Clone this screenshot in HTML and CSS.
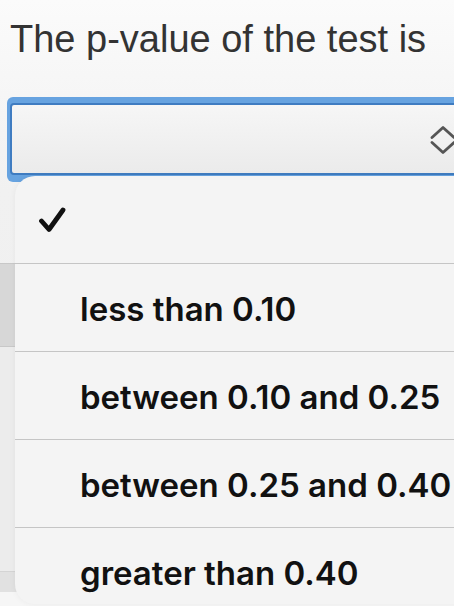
FILE: index.html
```html
<!DOCTYPE html>
<html lang="en">
<head>
<meta charset="utf-8">
<title>p-value question</title>
<link rel="stylesheet" href="styles.css">
</head>
<body>
<div class="page">
  <h1 class="question">The p-value of the test is</h1>
  <div class="select-ring">
    <div class="select-box">
      <svg class="chevrons" width="26" height="28" viewBox="0 0 26 28" aria-hidden="true">
        <polyline points="2,11.5 13,1.5 24,11.5" fill="none" stroke="#555555" stroke-width="2.8" stroke-linecap="round" stroke-linejoin="round"/>
        <polyline points="2,16.5 13,26.5 24,16.5" fill="none" stroke="#555555" stroke-width="2.8" stroke-linecap="round" stroke-linejoin="round"/>
      </svg>
    </div>
  </div>
  <div class="under-gap"></div>
  <div class="under-button"></div>
  <div class="under-body"></div>
  <div class="under-footer"></div>
  <div class="under-end"></div>

  <ul class="menu">
    <li class="menu-row">
      <svg class="check" width="28" height="28" viewBox="0 0 28 28" aria-hidden="true">
        <polyline points="3.5,15 11,23.5 25,4" fill="none" stroke="#111" stroke-width="4.8" stroke-linecap="round" stroke-linejoin="round"/>
      </svg>
    </li>
    <li class="menu-row"><span class="label">less than 0.10</span></li>
    <li class="menu-row"><span class="label">between 0.10 and 0.25</span></li>
    <li class="menu-row"><span class="label">between 0.25 and 0.40</span></li>
    <li class="menu-row"><span class="label">greater than 0.40</span></li>
  </ul>
</div>
</body>
</html>
```
FILE: styles.css
```css
html, body {
  margin: 0;
  padding: 0;
}
body {
  width: 454px;
  height: 606px;
  overflow: hidden;
  background: linear-gradient(#fbfbfb, #f1f1f1 190px, #eeeeee);
  font-family: "Liberation Sans", Arial, sans-serif;
}
.page {
  position: relative;
  display: flex;
  flex-direction: column;
  height: 606px;
  overflow: hidden;
}
.question {
  margin: 17px 0 0 10px;
  font-size: 38px;
  line-height: 44px;
  font-weight: normal;
  color: #333333;
  white-space: nowrap;
}
.select-ring {
  margin: 36px 0 0 7px;
  width: 480px;
  padding: 6px 0 7px 3px;
  background: #67a3e0;
  border-radius: 6px;
}
.select-box {
  height: 68px;
  border: 2px solid #3f7cc1;
  border-radius: 4px;
  background: linear-gradient(#f6f6f6, #ebebeb);
  display: flex;
  align-items: center;
  padding-left: 418px;
}
.chevrons {
  display: block;
  margin-top: 2px;
}
.under-gap {
  height: 81px;
}
.under-button {
  height: 82px;
  background: #d7d7d7;
  border-top: 1px solid #c8c8c8;
  border-bottom: 1px solid #c8c8c8;
}
.under-body {
  height: 224px;
  background: #ececec;
}
.under-footer {
  height: 20px;
  background: #e1e1e1;
  border-top: 1px solid #d4d4d4;
}
.under-end {
  flex: 1;
  background: #f6f6f6;
}
.menu {
  position: absolute;
  left: 15px;
  top: 176px;
  width: 470px;
  height: 428px;
  overflow: hidden;
  margin: 0;
  padding: 0;
  list-style: none;
  background: #f4f4f4;
  border-radius: 20px;
  box-shadow: 0 0 6px rgba(0, 0, 0, 0.05);
  font-family: Inter, "Noto Sans", sans-serif;
}
.menu-row {
  height: 87px;
  flex: none;
  display: flex;
  align-items: center;
  padding-left: 65px;
  border-bottom: 1px solid #c5c5c5;
  position: relative;
}
.menu-row:last-child {
  border-bottom: none;
}
.check {
  position: absolute;
  left: 23px;
  top: 30px;
}
.label {
  font-size: 33px;
  font-weight: 600;
  color: #111111;
  white-space: nowrap;
  margin-top: 2px;
}
```
